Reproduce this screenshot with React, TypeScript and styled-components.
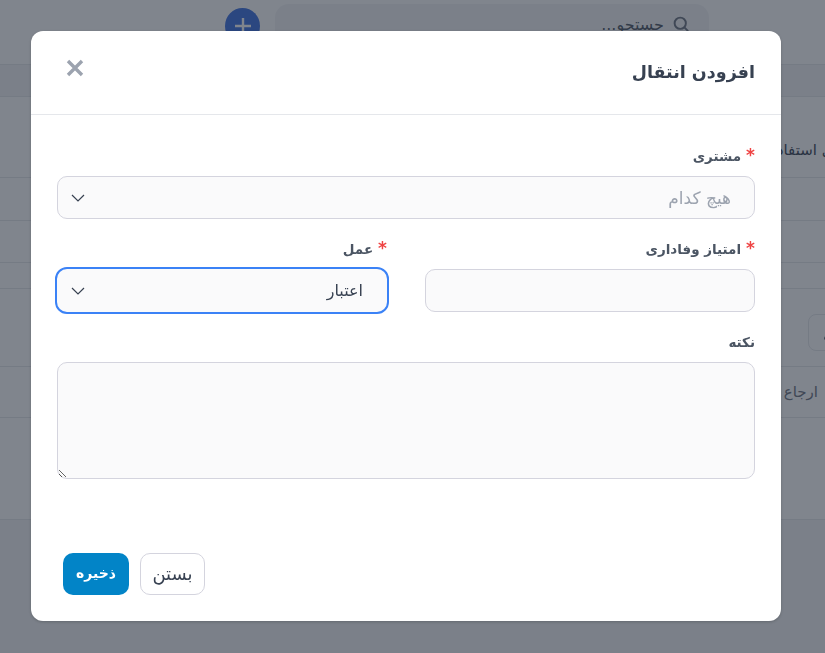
import React from "react";
import styled, { createGlobalStyle } from "styled-components";

const Global = createGlobalStyle`
  html, body { margin: 0; padding: 0; height: 100%; }
  body { background: #f3f4f6; font-family: "DejaVu Sans", "Noto Sans", sans-serif; direction: rtl; overflow: hidden; }
  * { box-sizing: border-box; }
`;

const Page = styled.div`
  width: 825px;
  height: 653px;
  background: #f3f4f6;
  display: flex;
  flex-direction: column;
`;
const TopBar = styled.header`
  height: 65px;
  flex: none;
  background: #fff;
  border-bottom: 1px solid #e5e7eb;
  display: flex;
  align-items: flex-start;
  gap: 15px;
  padding: 4px 116px 0 0;
`;
const SearchBox = styled.div`
  width: 434px;
  height: 52px;
  border-radius: 14px;
  background: #f3f4f6;
  display: flex;
  align-items: center;
  gap: 8px;
  padding: 0 19px 12px;
  font-size: 16px;
  color: #4b5563;
`;
const AddRound = styled.div`
  width: 35px;
  height: 36px;
  margin-top: 4px;
  border-radius: 50%;
  background: #3b6fe0;
  color: #fff;
  display: flex;
  align-items: center;
  justify-content: center;
`;
const SubBar = styled.div`
  height: 32px;
  flex: none;
  border-bottom: 1px solid #e5e7eb;
`;
const Card = styled.section`
  flex: none;
  height: 423px;
  background: #fff;
  border-bottom: 1px solid #e5e7eb;
  display: flex;
  flex-direction: column;
`;
const BackRow = styled.div<{ $h: number }>`
  height: ${(p) => p.$h}px;
  flex: none;
  border-bottom: 1px solid #e5e7eb;
  display: flex;
  align-items: center;
  white-space: nowrap;
  overflow: hidden;
`;
const BackHeading = styled.span`
  margin-right: -24px;
  margin-top: 26px;
  font-size: 15px;
  color: #374151;
`;
const BackText = styled.span`
  margin-right: 7px;
  font-size: 15px;
  color: #6b7280;
`;
const BackButton = styled.div`
  width: 50px;
  height: 37px;
  margin-right: -33px;
  margin-top: 10px;
  border: 1px solid #e5e7eb;
  border-radius: 8px;
  display: flex;
  align-items: center;
  justify-content: flex-end;
  padding-left: 14px;
`;
const Overlay = styled.div`
  position: fixed;
  inset: 0;
  background: rgba(31, 41, 55, 0.57);
  display: flex;
  justify-content: flex-start;
  direction: ltr;
  padding: 31px 0 0 31px;
`;
const Modal = styled.div`
  width: 750px;
  height: 590px;
  background: #fff;
  border-radius: 12px;
  box-shadow: 0 1px 3px rgba(0, 0, 0, 0.2);
  display: flex;
  flex-direction: column;
  direction: rtl;
`;
const ModalHead = styled.div`
  height: 84px;
  flex: none;
  border-bottom: 1px solid #e5e7eb;
  display: flex;
  align-items: center;
  justify-content: space-between;
  padding: 0 26px 0 32px;
`;
const Title = styled.h2`
  margin: 0 0 2px;
  font-size: 17.5px;
  font-weight: 700;
  color: #374151;
`;
const CloseBtn = styled.button`
  border: 0;
  background: none;
  padding: 0;
  margin-bottom: 10px;
  color: #9ca3af;
  display: flex;
`;
const Body = styled.div`
  flex: 1;
  padding: 30px 26px 0;
  display: flex;
  flex-direction: column;
  gap: 19px;
`;
const Two = styled.div`
  display: grid;
  grid-template-columns: 330px 330px;
  justify-content: space-between;
`;
const Field = styled.div`
  display: flex;
  flex-direction: column;
  gap: 9px;
`;
const Label = styled.label`
  display: block;
  height: 22px;
  font-size: 13.5px;
  font-weight: 700;
  color: #4b5563;
  line-height: 22px;
`;
const Star = styled.span`
  color: #ef4444;
  font-size: 17px;
  line-height: 0;
  margin-left: 5px;
`;
const Control = styled.div<{ $focus?: boolean; $muted?: boolean }>`
  height: 43px;
  border-radius: 10px;
  background: #fafafb;
  border: 1px solid ${(p) => (p.$focus ? "#fafafb" : "#d4d4de")};
  outline: ${(p) => (p.$focus ? "2px solid #3b82f6" : "none")};
  display: flex;
  align-items: center;
  justify-content: space-between;
  padding: 0 23px 0 13px;
  font-size: ${(p) => (p.$muted ? 17 : 16)}px;
  color: ${(p) => (p.$muted ? "#9ca3af" : "#374151")};
`;
const Area = styled.textarea`
  height: 117px;
  border-radius: 10px;
  background: #fafafb;
  border: 1px solid #d4d4de;
  resize: vertical;
  outline: none;
`;
const Footer = styled.div`
  flex: none;
  display: flex;
  direction: ltr;
  gap: 11px;
  padding: 0 32px 26px;
`;
const Btn = styled.button<{ $primary?: boolean }>`
  height: 42px;
  width: ${(p) => (p.$primary ? 66 : 65)}px;
  padding: 0 0 2px;
  border-radius: 10px;
  font-family: inherit;
  font-size: ${(p) => (p.$primary ? 14 : 18)}px;
  font-weight: ${(p) => (p.$primary ? 700 : 400)};
  border: ${(p) => (p.$primary ? "0" : "1px solid #d4d4de")};
  background: ${(p) => (p.$primary ? "#0284c7" : "#fff")};
  color: ${(p) => (p.$primary ? "#fff" : "#374151")};
`;

const Chevron = () => (
  <svg width="14" height="8" viewBox="0 0 14 8" fill="none" stroke="#374151" strokeWidth="1.2">
    <path d="M1 1l6 6 6-6" />
  </svg>
);

export default function App() {
  return (
    <>
      <Global />
      <Page>
        <TopBar>
          <SearchBox>
            <svg width="18" height="18" viewBox="0 0 24 24" fill="none" stroke="#6b7280" strokeWidth="2.6">
              <circle cx="11" cy="11" r="7.5" />
              <path d="M16.5 16.5l5 5" />
            </svg>
            جستجو...
          </SearchBox>
          <AddRound>
            <svg width="20" height="20" viewBox="0 0 20 20" stroke="#fff" strokeWidth="2.4">
              <path d="M10 2v16M2 10h16" />
            </svg>
          </AddRound>
        </TopBar>
        <SubBar />
        <Card>
          <BackRow $h={81}>
            <BackHeading>قابل استفاده</BackHeading>
          </BackRow>
          <BackRow $h={43} />
          <BackRow $h={42} />
          <BackRow $h={26} />
          <BackRow $h={78}>
            <BackButton>
              <svg width="14" height="14" viewBox="0 0 24 24" fill="#374151">
                <circle cx="12" cy="7" r="5" />
                <path d="M2 23c0-6 4-9 10-9s10 3 10 9z" />
              </svg>
            </BackButton>
          </BackRow>
          <BackRow $h={51}>
            <BackText>ارجاع</BackText>
          </BackRow>
        </Card>
      </Page>
      <Overlay>
        <Modal>
          <ModalHead>
            <Title>افزودن انتقال</Title>
            <CloseBtn>
              <svg width="24" height="24" viewBox="0 0 24 24" fill="none" stroke="currentColor" strokeWidth="3.4">
                <path d="M5 5l14 14M19 5L5 19" />
              </svg>
            </CloseBtn>
          </ModalHead>
          <Body>
            <Field>
              <Label><Star>*</Star>مشتری</Label>
              <Control $muted>
                هیچ کدام
                <Chevron />
              </Control>
            </Field>
            <Two>
              <Field>
                <Label><Star>*</Star>امتیاز وفاداری</Label>
                <Control />
              </Field>
              <Field>
                <Label><Star>*</Star>عمل</Label>
                <Control $focus>
                  اعتبار
                  <Chevron />
                </Control>
              </Field>
            </Two>
            <Field>
              <Label>نکته</Label>
              <Area />
            </Field>
          </Body>
          <Footer>
            <Btn $primary>ذخیره</Btn>
            <Btn>بستن</Btn>
          </Footer>
        </Modal>
      </Overlay>
    </>
  );
}
